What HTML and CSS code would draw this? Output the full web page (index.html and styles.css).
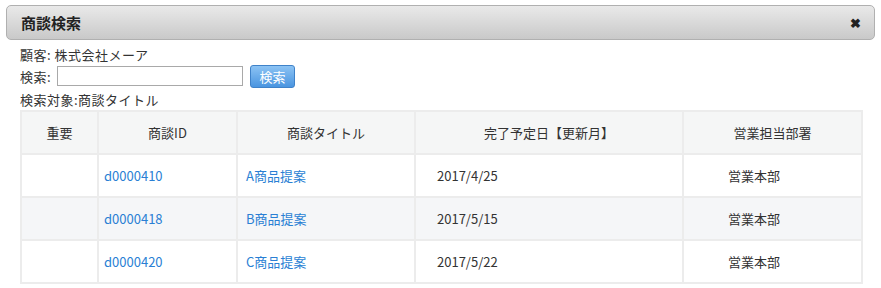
FILE: index.html
```html
<!DOCTYPE html>
<html lang="ja">
<head>
<meta charset="utf-8">
<link rel="stylesheet" href="styles.css">
</head>
<body>
<div class="titlebar">
  <span class="title">商談検索</span>
  <span class="close">✖</span>
</div>
<div class="content">
  <div class="line customer">顧客: 株式会社メーア</div>
  <div class="search-row">
    <span class="label">検索:</span>
    <input class="search-input" type="text">
    <button class="search-btn">検索</button>
  </div>
  <div class="line target">検索対象:商談タイトル</div>
  <table class="results">
    <thead>
      <tr>
        <th class="c1">重要</th>
        <th class="c2">商談ID</th>
        <th class="c3">商談タイトル</th>
        <th class="c4">完了予定日【更新月】</th>
        <th class="c5">営業担当部署</th>
      </tr>
    </thead>
    <tbody>
      <tr>
        <td></td>
        <td class="id"><a href="#">d0000410</a></td>
        <td class="ttl"><a href="#">A商品提案</a></td>
        <td class="date">2017/4/25</td>
        <td class="dept">営業本部</td>
      </tr>
      <tr class="alt">
        <td></td>
        <td class="id"><a href="#">d0000418</a></td>
        <td class="ttl"><a href="#">B商品提案</a></td>
        <td class="date">2017/5/15</td>
        <td class="dept">営業本部</td>
      </tr>
      <tr>
        <td></td>
        <td class="id"><a href="#">d0000420</a></td>
        <td class="ttl"><a href="#">C商品提案</a></td>
        <td class="date">2017/5/22</td>
        <td class="dept">営業本部</td>
      </tr>
    </tbody>
  </table>
</div>
</body>
</html>
```
FILE: styles.css
```css
html, body {
  margin: 0;
  padding: 0;
  background: #fff;
}
body {
  font-family: "Noto Sans CJK JP", "Noto Sans", sans-serif;
  font-size: 13px;
  color: #333;
}
.titlebar {
  margin: 5px 6px 0 6px;
  height: 35px;
  box-sizing: border-box;
  border: 1px solid #b0b0b0;
  border-radius: 5px;
  background: linear-gradient(#e9e9e9, #c9c9c9);
  display: flex;
  align-items: center;
  justify-content: space-between;
  padding: 0 13px 0 14px;
}
.title {
  font-weight: bold;
  font-size: 15px;
  color: #222;
}
.close {
  font-size: 13px;
  color: #222;
  font-weight: bold;
}
.content {
  padding: 7px 0 0 20px;
}
.line {
  height: 16px;
  line-height: 16px;
  letter-spacing: 0.5px;
}
.search-row {
  display: flex;
  align-items: center;
  height: 24px;
  margin-top: 1px;
}
.label {
  margin-right: 6px;
  letter-spacing: 0.5px;
}
.search-input {
  width: 186px;
  height: 20px;
  box-sizing: border-box;
  border: 1px solid #a9a9a9;
  margin: 0 7px 0 0;
  padding: 0;
}
.search-btn {
  width: 45px;
  height: 23px;
  box-sizing: border-box;
  border: 1px solid #3f82c9;
  border-radius: 3px;
  background: linear-gradient(#8cc3f4, #4a95e0);
  color: #fff;
  font-family: inherit;
  font-size: 13px;
  padding: 0;
  margin: 0;
}
.target {
  margin-top: 4px;
}
.results {
  margin-top: 2px;
  border-collapse: collapse;
  width: 841px;
  table-layout: fixed;
}
.results th, .results td {
  border: 2px solid #ececec;
  height: 41px;
  padding: 0;
}
.results th {
  background: #f5f6f6;
  font-weight: normal;
  text-align: center;
  color: #333;
}
.results tr.alt td {
  background: #f5f6f8;
}
.c1 { width: 75px; }
.c2 { width: 137px; }
.c3 { width: 176px; }
.c4 { width: 266px; }
.c5 { width: 177px; }
.results a {
  color: #2a7fd4;
  text-decoration: none;
}
.id { padding-left: 5px !important; }
.ttl { padding-left: 8px !important; }
.date { padding-left: 21px !important; }
.dept { padding-left: 44px !important; }
```
